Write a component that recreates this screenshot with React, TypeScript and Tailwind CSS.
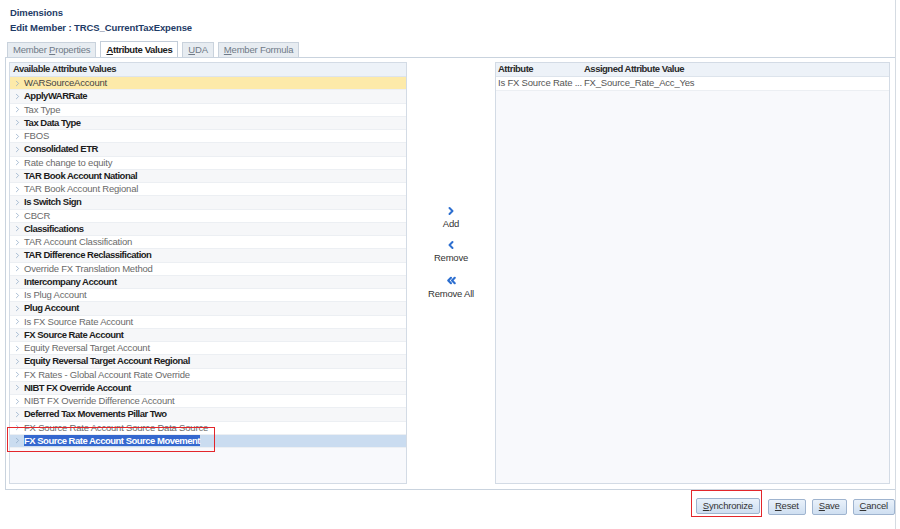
import { ChevronRight, ChevronLeft, ChevronsLeft } from "lucide-react";

const attributes = [
  "WARSourceAccount",
  "ApplyWARRate",
  "Tax Type",
  "Tax Data Type",
  "FBOS",
  "Consolidated ETR",
  "Rate change to equity",
  "TAR Book Account National",
  "TAR Book Account Regional",
  "Is Switch Sign",
  "CBCR",
  "Classifications",
  "TAR Account Classification",
  "TAR Difference Reclassification",
  "Override FX Translation Method",
  "Intercompany Account",
  "Is Plug Account",
  "Plug Account",
  "Is FX Source Rate Account",
  "FX Source Rate Account",
  "Equity Reversal Target Account",
  "Equity Reversal Target Account Regional",
  "FX Rates - Global Account Rate Override",
  "NIBT FX Override Account",
  "NIBT FX Override Difference Account",
  "Deferred Tax Movements Pillar Two",
  "FX Source Rate Account Source Data Source",
  "FX Source Rate Account Source Movement",
];

function Tab({ label, mnemonic, active }: { label: string; mnemonic: number; active?: boolean }) {
  return (
    <div
      className={
        active
          ? "h-[17px] px-[5px] flex items-center border border-b-0 border-[#c3cdd9] bg-white text-[#1b1b1b] font-bold tracking-[-0.4px] -mb-px"
          : "h-[15px] px-[5px] flex items-center border border-b-0 border-[#c9d2dc] bg-[#e7ecf1] text-[#6f7a87]"
      }
    >
      <span className="whitespace-pre">
        {label.slice(0, mnemonic)}
        <span className="underline">{label[mnemonic]}</span>
        {label.slice(mnemonic + 1)}
      </span>
    </div>
  );
}

function Row({ name, index }: { name: string; index: number }) {
  const first = index === 0;
  const last = index === attributes.length - 1;
  const strong = index % 2 === 1;
  let bg = index % 2 === 0 ? "bg-white" : "bg-[#f6f7f9]";
  if (first) bg = "bg-[#fdeaa9]";
  if (last) bg = "bg-[#cadcf0]";
  return (
    <div className={`relative h-[13.25px] flex items-center border-b border-[#eceff3] ${bg}`}>
      <ChevronRight size={9} strokeWidth={2} className="ml-[3px] mr-[2px] text-[#8fa9c6] shrink-0" />
      {last ? (
        <>
          <span className="font-bold tracking-[-0.5px] text-white bg-[#3568cf] leading-[11px]">{name}</span>
          <span className="absolute left-[-3px] top-[-8px] w-[208px] h-[25px] border-[1.5px] border-[#e3262b]" />
        </>
      ) : (
        <span
          className={
            strong
              ? "font-bold tracking-[-0.5px] text-[#1d1d1d]"
              : first
              ? "text-[#444]"
              : "text-[#6a6a6a]"
          }
        >
          {name}
        </span>
      )}
    </div>
  );
}

function Btn({ label, boxed }: { label: string; boxed?: boolean }) {
  return (
    <div className={boxed ? "pl-[4px] pr-[1px] pt-[7px] pb-[2px] border-[1.5px] border-[#e3262b] -mt-[8px] -mb-[2px]" : ""}>
      <div className="h-[16px] px-[6px] flex items-center rounded-[2px] border border-[#9fb4cf] bg-gradient-to-b from-[#e9f1fa] to-[#cfdff1] text-[#333]">
        <span className="underline">{label[0]}</span>
        {label.slice(1)}
      </div>
    </div>
  );
}

export default function App() {
  return (
    <div className="w-[900px] h-[529px] bg-white text-[9.5px] tracking-[-0.2px] font-['Liberation_Sans',Arial,sans-serif] flex">
      <div className="w-[896px] border-r border-[#d5dbe2] flex flex-col">
        <div className="pl-[10px] pt-[6px] h-[21px] text-[#1e3b66] font-bold text-[9.5px] tracking-[-0.1px]">Dimensions</div>
        <div className="pl-[10px] h-[17px] text-[#1e3b66] font-bold text-[9.5px] tracking-[-0.1px]">
          Edit Member : TRCS_CurrentTaxExpense
        </div>
        <div className="flex items-end gap-[4px] pl-[7px] h-[19px]">
          <Tab label="Member Properties" mnemonic={7} />
          <Tab label="Attribute Values" mnemonic={0} active />
          <Tab label="UDA" mnemonic={0} />
          <Tab label="Member Formula" mnemonic={0} />
        </div>
        <div className="ml-[5px] h-[433px] border-t border-b border-l border-[#c9d3de] flex pt-[4px] pl-[3px] pr-[5px] pb-[5px]">
          <div className="w-[398px] border border-[#d3dbe5] bg-[#f8f9fc] flex flex-col">
            <div className="h-[14px] flex items-center pl-[3px] bg-[#edf2f8] border-b border-[#dde4ec] text-[#2a2a2a] font-bold tracking-[-0.5px]">
              Available Attribute Values
            </div>
            {attributes.map((a, i) => (
              <Row key={a} name={a} index={i} />
            ))}
          </div>
          <div className="w-[88px] flex flex-col items-center pt-[143px] gap-[8px] text-[#333]">
            <div className="flex flex-col items-center">
              <ChevronRight size={12} strokeWidth={4} className="text-[#2d6fd0]" />
              <span>Add</span>
            </div>
            <div className="flex flex-col items-center">
              <ChevronLeft size={12} strokeWidth={4} className="text-[#2d6fd0]" />
              <span>Remove</span>
            </div>
            <div className="flex flex-col items-center">
              <ChevronsLeft size={13} strokeWidth={4} className="text-[#2d6fd0]" />
              <span>Remove All</span>
            </div>
          </div>
          <div className="flex-1 border border-[#d3dbe5] bg-[#f8f9fc] flex flex-col">
            <div className="h-[14px] flex items-center bg-[#edf2f8] border-b border-[#dde4ec] text-[#2a2a2a] font-bold tracking-[-0.5px]">
              <div className="w-[86px] pl-[2px]">Attribute</div>
              <div className="pl-[2px]">Assigned Attribute Value</div>
            </div>
            <div className="h-[14px] flex items-center bg-white border-b border-[#eceff3] text-[#555]">
              <div className="w-[86px] pl-[2px] whitespace-nowrap">Is FX Source Rate ...</div>
              <div className="pl-[2px]">FX_Source_Rate_Acc_Yes</div>
            </div>
          </div>
        </div>
        <div className="flex justify-end items-center gap-[6px] pt-[8px]">
          <Btn label="Synchronize" boxed />
          <Btn label="Reset" />
          <Btn label="Save" />
          <Btn label="Cancel" />
        </div>
      </div>
    </div>
  );
}
